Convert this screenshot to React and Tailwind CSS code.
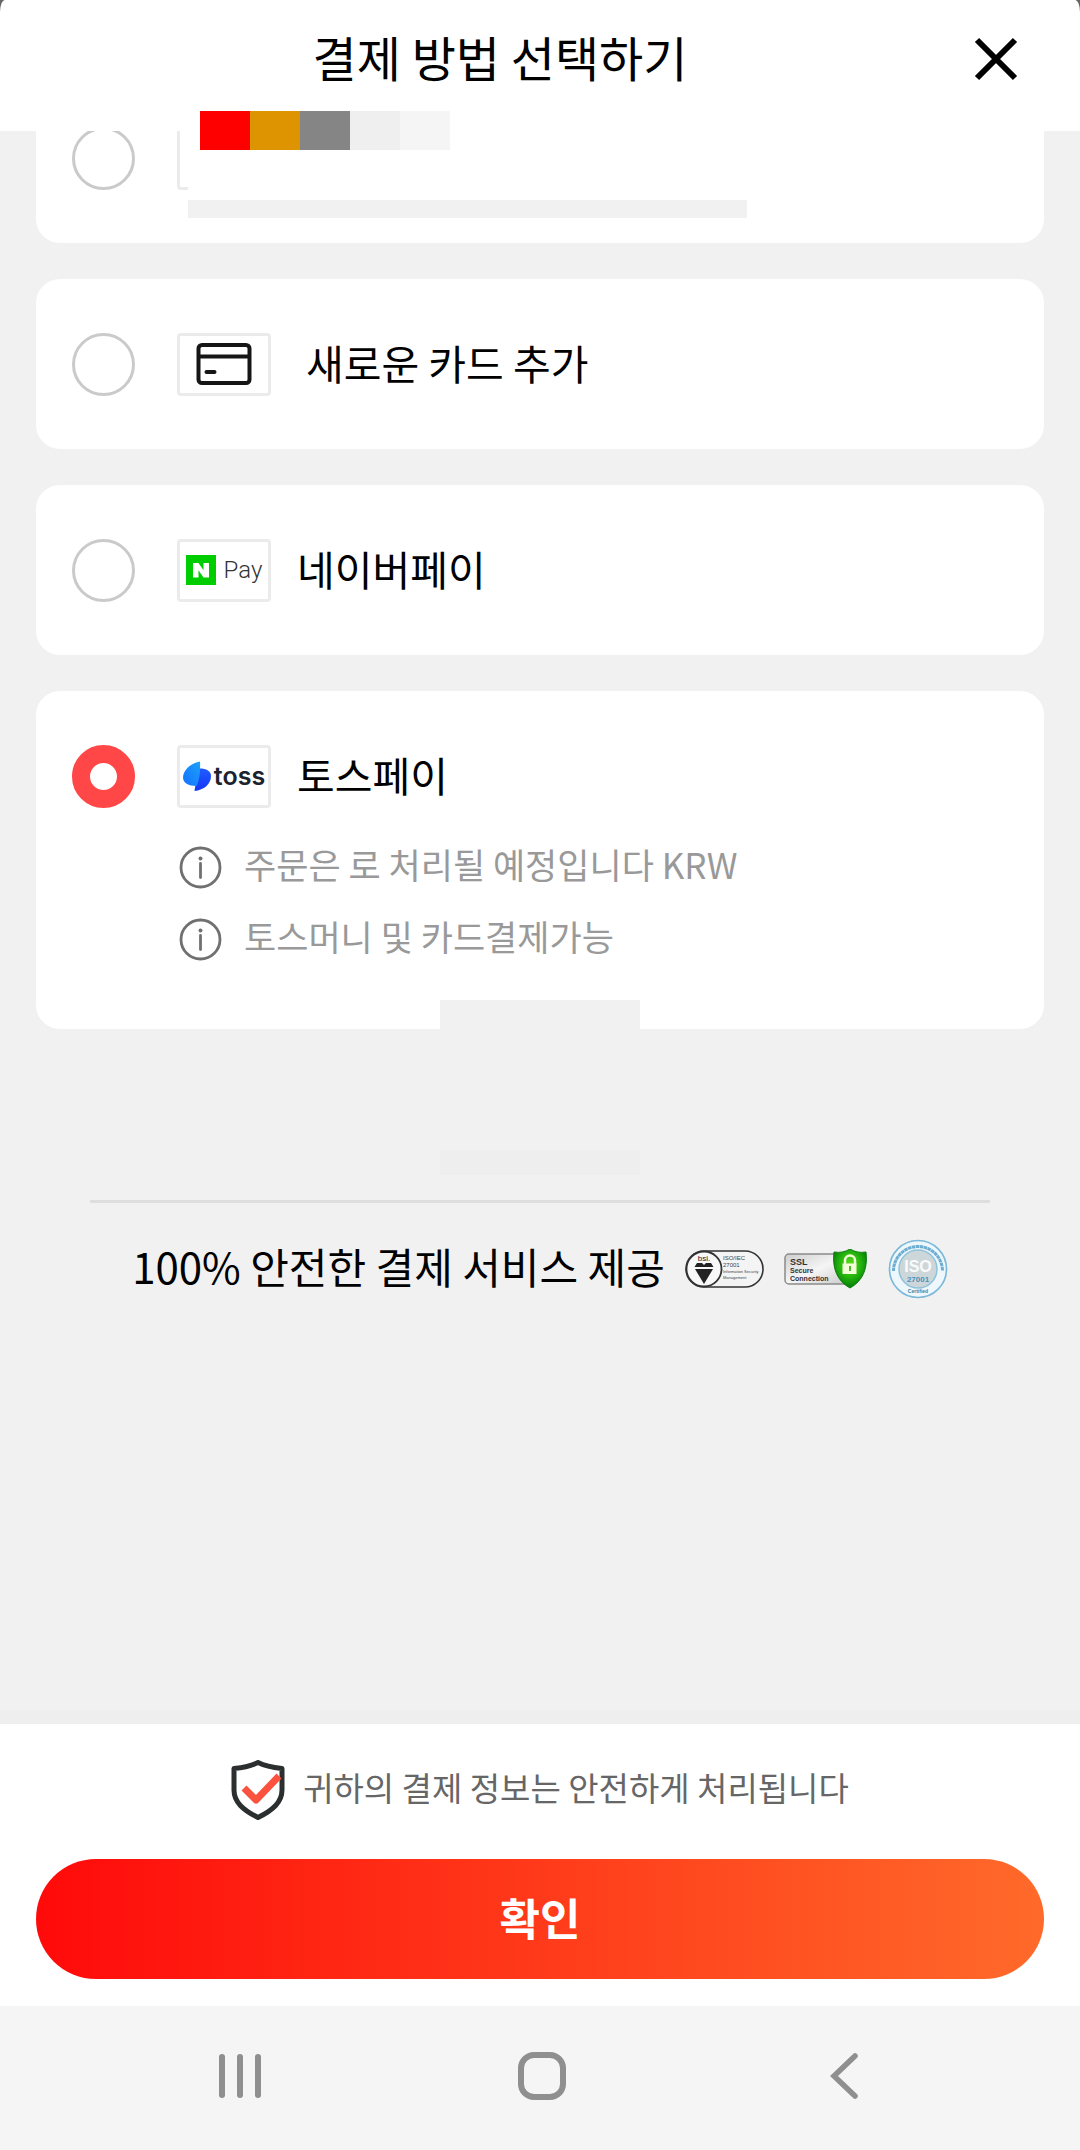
import React, { useState } from "react";

function Logo({ children }) {
  return (
    <span className="flex h-[63px] w-[94px] shrink-0 items-center justify-center rounded-[4px] border-[3px] border-[#ebebeb] bg-white">
      {children}
    </span>
  );
}

function CardIcon() {
  return (
    <svg width="56" height="44" viewBox="0 0 56 44" fill="none" stroke="#161616" aria-hidden="true">
      <rect x="2.5" y="3" width="51" height="38" rx="3.5" strokeWidth="4" />
      <path d="M2.5 14.5h51" strokeWidth="4" />
      <path d="M10.500 30h8" strokeWidth="4" strokeLinecap="round" />
    </svg>
  );
}

function NaverPay() {
  return (
    <span className="flex items-center gap-2">
      <svg width="30" height="30" viewBox="0 0 30 30" aria-hidden="true">
        <path d="M0 0h30v30H0z" fill="#00cd00" />
        <path d="M7 8h5.500l5 7.300V8H23v14.500h-5.500l-5-7.300v7.300H7z" fill="#fff" />
      </svg>
      <span className="font-['Roboto',sans-serif] text-[24px] leading-8 font-light text-[#333]">Pay</span>
    </span>
  );
}

function TossPay() {
  return (
    <span className="flex items-center gap-[3px]">
      <svg width="28" height="30" viewBox="0 0 28 30" aria-hidden="true">
        <defs>
          <linearGradient id="tossLight" x1="1" y1="0" x2="0" y2="1">
            <stop offset="0" stopColor="#1ba2fb" />
            <stop offset="1" stopColor="#1470ff" />
          </linearGradient>
          <linearGradient id="tossDark" x1="0" y1="0" x2="0" y2="1">
            <stop offset="0" stopColor="#1f5cff" />
            <stop offset="1" stopColor="#1436f5" />
          </linearGradient>
        </defs>
        <path d="M15 7.500C22.500 7 28 9.500 28 15c0 8-7 14-16.500 15z" fill="url(#tossDark)" />
        <path d="M17 .500c.500 9-.500 17-3 24.500C5 25 0 21.500 0 16.500 0 9 8 2 17 .500z" fill="url(#tossLight)" />
      </svg>
      <span className="font-['Inter',sans-serif] text-[25px] leading-8 font-semibold text-[#1b2230]">toss</span>
    </span>
  );
}

function Radio({ id, value, onChange, label }) {
  return (
    <input
      id={id}
      type="radio"
      name="payment"
      aria-label={label}
      checked={value === id}
      onChange={() => onChange(id)}
      className="m-0 size-[63px] shrink-0 appearance-none rounded-full border-[3px] border-[#cacaca] bg-white checked:border-[18px] checked:border-[#ff4747]"
    />
  );
}

function Method({ id, logo, label, labelClass, value, onChange, children }) {
  return (
    <li className="rounded-3xl bg-white px-9">
      <div className="flex h-[170px] items-center">
        <Radio id={id} value={value} onChange={onChange} />
        <label htmlFor={id} className="ml-[42px] flex items-center">
          <Logo>{logo}</Logo>
          <span className={"pb-1 text-[41px] leading-[60px] " + labelClass}>{label}</span>
        </label>
      </div>
      {children}
    </li>
  );
}

function Note({ children }) {
  return (
    <p className="flex h-[72px] items-center gap-[22px] text-[35px] leading-[52px] text-[#999]">
      <svg width="43" height="43" viewBox="0 0 43 43" fill="none" stroke="#707070" aria-hidden="true">
        <circle cx="21.500" cy="21.500" r="19.500" strokeWidth="2.800" />
        <path d="M21.500 17.500v14" strokeWidth="2.800" strokeLinecap="round" />
        <circle cx="21.500" cy="12.500" r="2" fill="#707070" stroke="none" />
      </svg>
      <span className="pb-1.5">{children}</span>
    </p>
  );
}

function BsiBadge() {
  return (
    <svg width="79" height="38" viewBox="0 0 79 38" role="img" aria-label="bsi ISO/IEC 27001">
      <rect x="1" y="1" width="77" height="36" rx="18" fill="#f4f4f4" stroke="#333" strokeWidth="1.600" />
      <circle cx="19" cy="19" r="17.500" fill="#f8f8f8" stroke="#333" strokeWidth="1.800" />
      <text x="19" y="11" textAnchor="middle" fontFamily="Liberation Sans" fontSize="8" fill="#222">bsi.</text>
      <path d="M12 13h5l2 2 2-2h5l2.500 4h-19z" fill="#222" />
      <path d="M10 19h18l-9 15z" fill="#222" />
      <g fontFamily="Liberation Sans" fill="#444">
        <text x="38" y="10" fontSize="6">ISO/IEC</text>
        <text x="38" y="17" fontSize="6">27001</text>
        <text x="38" y="23" fontSize="4">Information Security</text>
        <text x="38" y="29" fontSize="4">Management</text>
      </g>
    </svg>
  );
}

function SslBadge() {
  return (
    <svg width="84" height="40" viewBox="0 0 84 40" role="img" aria-label="SSL Secure Connection">
      <defs>
        <linearGradient id="sslPlate" x1="0" y1="0" x2="1" y2="1">
          <stop offset="0" stopColor="#cfcfcf" />
          <stop offset="0.500" stopColor="#f5f5f5" />
          <stop offset="1" stopColor="#c8c8c8" />
        </linearGradient>
        <radialGradient id="sslShield" cx="0.500" cy="0.400" r="0.600">
          <stop offset="0" stopColor="#5fe01a" />
          <stop offset="0.600" stopColor="#1fae0c" />
          <stop offset="1" stopColor="#07780a" />
        </radialGradient>
      </defs>
      <rect x="1" y="5" width="66" height="30" rx="4" fill="url(#sslPlate)" stroke="#8b8b8b" strokeWidth="1.500" />
      <g fontFamily="Liberation Sans" fontWeight="bold" fill="#333">
        <text x="6" y="16" fontSize="9">SSL</text>
        <text x="6" y="24" fontSize="7">Secure</text>
        <text x="6" y="32" fontSize="7">Connection</text>
      </g>
      <path d="M66 0c5 3 10 4 16 3 2 16-3 29-16 36C53 32 48 19 50 3c6 1 11 0 16-3z" fill="url(#sslShield)" stroke="#0c7d0d" strokeWidth="1" />
      <path d="M61 15v-3.500a5 5 0 0 1 10 0V15" fill="none" stroke="#f2ffd8" strokeWidth="2.500" />
      <path d="M58.500 14.500h14V25h-14z" fill="#f2ffd8" />
      <path d="M66 17v5" stroke="#51b92b" strokeWidth="2" />
    </svg>
  );
}

function IsoBadge() {
  return (
    <svg width="60" height="60" viewBox="0 0 60 60" role="img" aria-label="ISO 27001 Certified">
      <circle cx="30" cy="30" r="28.500" fill="#eef7fc" stroke="#7ab8d9" strokeWidth="1.600" />
      <path d="M5.500 32a24.500 24.500 0 1 1 49 0" fill="none" stroke="#6eaed0" strokeWidth="3" strokeDasharray="3.500 0.500" />
      <circle cx="30" cy="30" r="19" fill="#cdd7da" stroke="#8fc3dd" strokeWidth="1.500" />
      <g textAnchor="middle" fontFamily="Liberation Sans" fontWeight="bold">
        <text x="30" y="33" fontSize="16" fill="#fafafa">ISO</text>
        <text x="30" y="43" fontSize="8" fill="#4a93bb">27001</text>
        <text x="30" y="54" fontSize="5" fill="#3d83aa">Certified</text>
      </g>
    </svg>
  );
}

function ShieldCheck() {
  return (
    <svg width="54" height="60" viewBox="0 0 54 60" fill="none" aria-hidden="true">
      <path d="M27 2.500c7 3.500 15 5 24 6V30c0 12-9 20-24 27.500C12 50 3 42 3 30V8.500c9-1 17-2.500 24-6z" stroke="#2b2f2f" strokeWidth="5" strokeLinejoin="round" />
      <path d="M13 28l12 12 23-24" stroke="#fb5240" strokeWidth="7" strokeLinejoin="round" />
    </svg>
  );
}

export default function App() {
  const [value, setValue] = useState("toss");
  const shared = { value, onChange: setValue };
  return (
    <div className="flex min-h-screen flex-col bg-[#666] font-['Noto_Sans_CJK_KR',sans-serif] text-black">
      <header className="relative z-10 flex h-[131px] items-center rounded-[5px_5px_0_0/12px_12px_0_0] bg-white pr-11 pb-[13px] pl-11">
        <h1 className="flex-1 pb-1.5 text-center text-[48px] leading-[70px]">결제 방법 선택하기</h1>
        <button type="button" aria-label="닫기" className="flex size-20 items-center justify-center">
          <svg width="44" height="44" viewBox="0 0 44 44" fill="none" stroke="#000" strokeWidth="6" aria-hidden="true">
            <path d="M3 3l38 38M41 3L3 41" />
          </svg>
        </button>
        <div className="absolute top-[111px] left-[200px] flex h-[39px]" aria-hidden="true">
          <span className="w-[50px] bg-[#ff0000]" />
          <span className="w-[50px] bg-[#de9300]" />
          <span className="w-[50px] bg-[#858585]" />
          <span className="w-[50px] bg-[#efefef]" />
          <span className="w-[50px] bg-[#f5f5f5]" />
        </div>
      </header>

      <main className="flex-1 overflow-hidden bg-[#f1f1f1] px-9">
        <ul className="-mt-[58px] flex flex-col gap-9">
          <li className="relative flex h-[170px] items-center rounded-3xl bg-white px-9">
            <Radio id="saved" label="저장된 카드" {...shared} />
            <span className="ml-[42px] h-[63px] w-[11px] rounded-l-[4px] border-[3px] border-r-0 border-[#ebebeb]" />
            <span className="absolute bottom-[25px] left-[152px] h-[18px] w-[559px] bg-[#f1f1f1]" />
          </li>
          <Method id="card" logo={<CardIcon />} label="새로운 카드 추가" labelClass="ml-[35px]" {...shared} />
          <Method id="naver" logo={<NaverPay />} label="네이버페이" labelClass="ml-[26px]" {...shared} />
          <Method id="toss" logo={<TossPay />} label="토스페이" labelClass="ml-[26px]" {...shared}>
            <div className="relative -mt-[30px] pb-[54px] pl-[107px]">
              <Note>주문은 로 처리될 예정입니다 KRW</Note>
              <Note>토스머니 및 카드결제가능</Note>
              <span className="absolute bottom-0 left-1/2 h-[29px] w-[200px] -translate-x-1/2 bg-[#f1f1f1]" />
            </div>
          </Method>
        </ul>

        <div className="mx-auto mt-[121px] h-[25px] w-[200px] bg-[#eee]" />
        <hr className="mx-[54px] mt-[25px] border-t-[3px] border-[#dedede]" />
        <section className="mt-[33px] flex items-center justify-center gap-5">
          <p className="pb-1.5 text-[42px] leading-[60px]">100% 안전한 결제 서비스 제공</p>
          <BsiBadge />
          <SslBadge />
          <IsoBadge />
        </section>
      </main>

      <footer className="border-t-[14px] border-[#eee] bg-white">
        <div className="flex flex-col px-9 pt-9 pb-[27px]">
          <p className="flex items-center justify-center gap-[18px] text-[33px] leading-[52px] text-[#666]">
            <ShieldCheck />
            <span className="pb-1.5">귀하의 결제 정보는 안전하게 처리됩니다</span>
          </p>
          <button type="button" className="mt-[39px] h-[120px] rounded-full bg-linear-to-r/srgb from-[#ff0a0a] to-[#ff6a2a] pb-1 text-[44px] leading-[60px] font-bold text-white">
            확인
          </button>
        </div>
        <nav className="grid h-36 grid-cols-[1fr_244px_1fr] items-center bg-[#f5f5f5] pb-1">
          <button type="button" aria-label="최근 앱" className="mr-36 justify-self-end pr-3">
            <svg width="44" height="46" viewBox="0 0 44 46" stroke="#8f8f8f" strokeWidth="6" strokeLinecap="round" aria-hidden="true">
              <path d="M4 4v38M22 4v38M40 4v38" />
            </svg>
          </button>
          <button type="button" aria-label="홈" className="justify-self-center pl-1">
            <svg width="48" height="48" viewBox="0 0 48 48" fill="none" aria-hidden="true">
              <rect x="3" y="3" width="42" height="42" rx="13" stroke="#8f8f8f" strokeWidth="6" />
            </svg>
          </button>
          <button type="button" aria-label="뒤로" className="ml-36 justify-self-start pl-[23px]">
            <svg width="30" height="46" viewBox="0 0 30 46" fill="none" stroke="#8f8f8f" strokeWidth="5.500" strokeLinecap="round" aria-hidden="true">
              <path d="M26 3L5 23l21 20" />
            </svg>
          </button>
        </nav>
      </footer>
    </div>
  );
}
